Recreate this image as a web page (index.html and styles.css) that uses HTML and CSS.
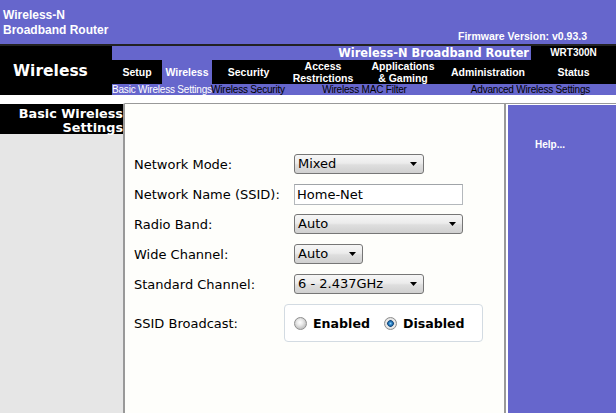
FILE: index.html
```html
<!DOCTYPE html>
<html lang="en">
<head>
<meta charset="utf-8">
<title>Wireless-N Broadband Router - Basic Wireless Settings</title>
<link rel="stylesheet" href="styles.css">
</head>
<body>
<header class="header">
  <div class="title">Wireless-N<br>Broadband Router</div>
  <div class="firmware">Firmware Version: v0.93.3</div>
</header>
<nav class="nav">
  <div class="brand">Wireless</div>
  <div class="nav-main">
    <div class="nav-top">
      <div class="product">Wireless-N Broadband Router</div>
      <div class="model">WRT300N</div>
    </div>
    <ul class="tabs">
      <li class="tab t-setup">Setup</li>
      <li class="tab t-wireless active">Wireless</li>
      <li class="tab t-security">Security</li>
      <li class="tab t-access">Access<br>Restrictions</li>
      <li class="tab t-apps">Applications<br>&amp; Gaming</li>
      <li class="tab t-admin">Administration</li>
      <li class="tab t-status">Status</li>
    </ul>
    <div class="subtabs">
      <span class="sub s-basic active">Basic Wireless Settings</span>
      <span class="sub s-sec">Wireless Security</span>
      <span class="sub s-mac">Wireless MAC Filter</span>
      <span class="sub s-adv">Advanced Wireless Settings</span>
    </div>
  </div>
</nav>
<main class="main">
  <aside class="side">
    <div class="side-title">Basic Wireless<br>Settings</div>
  </aside>
  <section class="content">
    <div class="row">
      <span class="label">Network Mode:</span>
      <div class="select w130"><span>Mixed</span><svg class="arrow" width="7" height="4" viewBox="0 0 7 4"><path d="M0 0H7L3.5 4Z" fill="#000"/></svg></div>
    </div>
    <div class="row">
      <span class="label">Network Name (SSID):</span>
      <input class="text" type="text" value="Home-Net">
    </div>
    <div class="row">
      <span class="label">Radio Band:</span>
      <div class="select w169"><span>Auto</span><svg class="arrow" width="7" height="4" viewBox="0 0 7 4"><path d="M0 0H7L3.5 4Z" fill="#000"/></svg></div>
    </div>
    <div class="row">
      <span class="label">Wide Channel:</span>
      <div class="select w69"><span>Auto</span><svg class="arrow" width="7" height="4" viewBox="0 0 7 4"><path d="M0 0H7L3.5 4Z" fill="#000"/></svg></div>
    </div>
    <div class="row">
      <span class="label">Standard Channel:</span>
      <div class="select w130"><span>6 - 2.437GHz</span><svg class="arrow" width="7" height="4" viewBox="0 0 7 4"><path d="M0 0H7L3.5 4Z" fill="#000"/></svg></div>
    </div>
    <div class="row row-ssid">
      <span class="label">SSID Broadcast:</span>
      <div class="ssid-box">
        <input class="radio" type="radio" name="ssid" id="en">
        <label class="opt" for="en">Enabled</label>
        <input class="radio second" type="radio" name="ssid" id="dis" checked>
        <label class="opt" for="dis">Disabled</label>
      </div>
    </div>
  </section>
  <aside class="help-wrap">
    <div class="help">Help...</div>
  </aside>
</main>
</body>
</html>
```
FILE: styles.css
```css
html, body {
  margin: 0;
  padding: 0;
  background: #fff;
}
body {
  width: 616px;
  font-family: "DejaVu Sans", Verdana, sans-serif;
  color: #000;
  overflow: hidden;
}

/* header */
.header {
  height: 44px;
  background: #6666cc;
  border-bottom: 2px solid #222;
  display: flex;
  justify-content: space-between;
}
.title {
  padding: 8px 0 0 3px;
  font: bold 12px/15px "Liberation Sans", Arial, sans-serif;
  color: #fff;
}
.firmware {
  align-self: flex-end;
  padding: 0 29px 2px 0;
  font: bold 10.5px/12px "Liberation Sans", Arial, sans-serif;
  color: #fff;
}

/* nav */
.nav {
  display: flex;
  height: 49px;
}
.brand {
  width: 112px;
  box-sizing: border-box;
  padding-left: 13px;
  background: #000;
  color: #fff;
  display: flex;
  align-items: center;
  font: bold 15.5px "DejaVu Sans", Verdana, sans-serif;
}
.nav-main {
  flex: 1;
  display: flex;
  flex-direction: column;
}
.nav-top {
  height: 14px;
  display: flex;
  background: #6666cc;
}
.product {
  flex: 1;
  text-align: right;
  padding-right: 2px;
  color: #fff;
  font: bold 11.4px/14px "DejaVu Sans", Verdana, sans-serif;
}
.model {
  width: 85px;
  background: #000;
  color: #fff;
  text-align: center;
  font: bold 10px/14px "Liberation Sans", Arial, sans-serif;
}
.tabs {
  height: 24px;
  margin: 0;
  padding: 0;
  list-style: none;
  display: flex;
  background: #000;
}
.tab {
  display: flex;
  align-items: center;
  justify-content: center;
  text-align: center;
  color: #fff;
  font: bold 10.5px/12px "Liberation Sans", Arial, sans-serif;
}
.tab.active { background: #6666cc; }
.t-setup { width: 50px; }
.t-wireless { width: 50px; }
.t-security { width: 73px; }
.t-access { width: 76px; }
.t-apps { width: 84px; }
.t-admin { width: 86px; }
.t-status { width: 85px; }

.subtabs {
  height: 11px;
  display: flex;
  background: #6666cc;
  font: 10px/11px "Liberation Sans", Arial, sans-serif;
  letter-spacing: -0.2px;
  color: #000;
  white-space: nowrap;
}
.sub.active { color: #fff; }
.s-basic { width: 99px; }
.s-sec { width: 73px; }
.s-mac { width: 161px; text-align: center; }
.s-adv { width: 171px; text-align: center; }

/* main */
.main {
  margin-top: 8px;
  display: flex;
  height: 310px;
  background: #fff;
}
.side {
  width: 123px;
  border-top: 1px solid #fff;
  border-right: 2px solid #999;
  background: #e6e6e6;
}
.side-title {
  height: 30px;
  box-sizing: border-box;
  padding-top: 3px;
  background: #000;
  color: #fff;
  text-align: right;
  font: bold 12.8px/14px "DejaVu Sans", Verdana, sans-serif;
}
.content {
  width: 381px;
  box-sizing: border-box;
  border-top: 1px solid #999;
  border-right: 2px solid #999;
  background: #fefefb;
  padding: 45px 0 0 9px;
  font-size: 13px;
}
.help-wrap {
  flex: 1;
  border-top: 1px solid #999;
  padding: 1px 0 0 2px;
}
.help {
  height: 100%;
  box-sizing: border-box;
  background: #6666cc;
  padding: 34px 0 0 27px;
  color: #fff;
  font: bold 10px/12px "Liberation Sans", Arial, sans-serif;
}

/* form */
.row {
  display: flex;
  align-items: center;
  height: 30px;
}
.label {
  width: 160px;
  flex: none;
  white-space: nowrap;
}
.select {
  height: 20px;
  box-sizing: border-box;
  border: 1px solid #767676;
  border-radius: 3px;
  background: linear-gradient(#f6f6f6, #ececec 45%, #dedede 55%, #d0d0d0);
  display: flex;
  align-items: center;
  justify-content: space-between;
  padding: 0 6px 0 3px;
  font: 13px/18px "DejaVu Sans", Verdana, sans-serif;
}
.w130 { width: 130px; }
.w169 { width: 169px; }
.w69 { width: 69px; }
.arrow { flex: none; }
.text {
  width: 169px;
  height: 21px;
  box-sizing: border-box;
  margin: 0;
  border: 1px solid #b4b8bc;
  border-top-color: #a0a4a8;
  background: #fff;
  padding: 0 2px;
  font: 13px "DejaVu Sans", Verdana, sans-serif;
  color: #000;
}
.row-ssid {
  height: 38px;
  margin-top: 5px;
}
.ssid-box {
  width: 199px;
  height: 38px;
  box-sizing: border-box;
  margin-left: -10px;
  padding: 0 0 0 9px;
  border: 1px solid #d3dbe2;
  border-radius: 4px;
  background: #fff;
  display: flex;
  align-items: center;
}
.radio {
  -webkit-appearance: none;
  appearance: none;
  width: 13px;
  height: 13px;
  margin: 0;
  border: 1px solid #8e8e8e;
  border-radius: 50%;
  box-sizing: border-box;
  background: radial-gradient(circle at 45% 40%, #ffffff 0, #e9e9e9 3px, #c6c6c6 6px);
  flex: none;
}
.radio:checked {
  background: radial-gradient(circle at 50% 50%, #8fd0fa 0, #2f86c8 1.5px, #12487e 3px, #d8d8d8 3.6px, #eeeeee 4.5px, #cfcfcf 6px);
}
.radio.second { margin-left: 14px; }
.opt {
  margin-left: 6px;
  font: bold 12.6px "DejaVu Sans", Verdana, sans-serif;
}
```
